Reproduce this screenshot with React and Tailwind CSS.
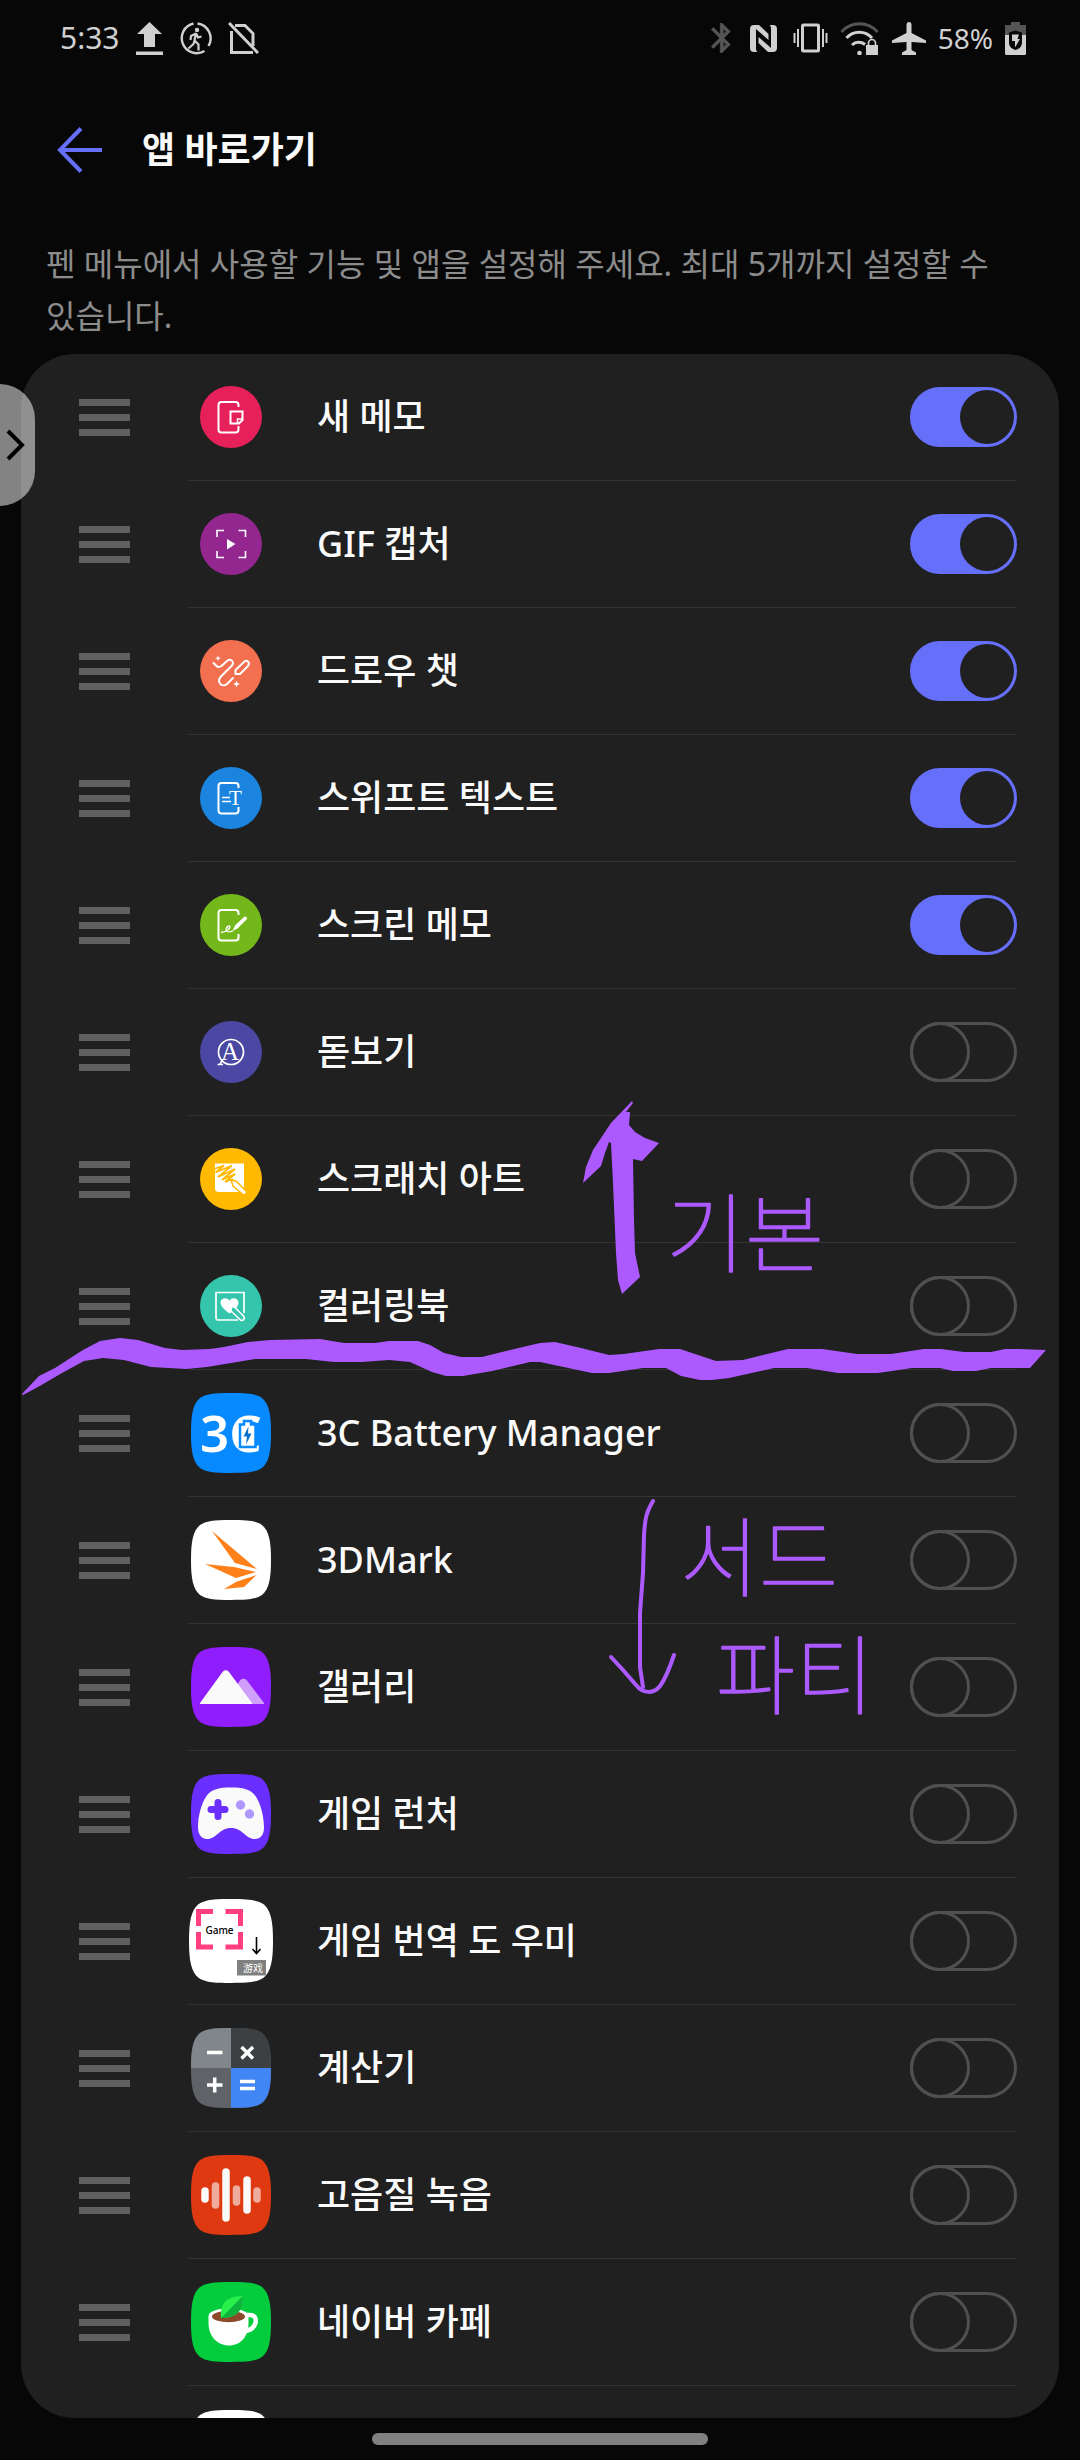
import React, { useState } from 'react';

const FONT = 'font-["Noto_Sans","Noto_Sans_CJK_KR",sans-serif]';
const SQUIRCLE = 'M40 0C58 0 65 1 71 5C78 11 80 21 80 40C80 59 78 69 71 75C65 79 58 80 40 80C22 80 15 79 9 75C2 69 0 59 0 40C0 21 2 11 9 5C15 1 22 0 40 0Z';
const PHONE = 'M38.5 21V19a3 3 0 0 0-3-3H21.5a3 3 0 0 0-3 3V43.5a3 3 0 0 0 3 3H35.5a3 3 0 0 0 3-3V40';

// Round icons of the built-in pen tools
const ToolIcon = ({ color, children }) => (
  <svg className="h-[62px] w-[62px]" viewBox="0 0 62 62" fill="none" stroke="white" strokeWidth="2" aria-hidden="true">
    <circle cx="31" cy="31" r="31" fill={color} stroke="none" />
    {children}
  </svg>
);

// Rounded square icons of the installed apps
const AppIcon = ({ color, children }) => (
  <svg className="h-20 w-20" viewBox="0 0 80 80" fill="none" aria-hidden="true">
    <path d={SQUIRCLE} fill={color} />
    {children}
  </svg>
);

const NewMemoIcon = () => (
  <ToolIcon color="#e62159">
    <path d={PHONE} />
    <path d="M30.5 25.5H42.5V34L39 37.5H30.5Z" />
    <path d="M37.5 37V33H42" strokeWidth="1.6" />
  </ToolIcon>
);

const GifIcon = () => (
  <ToolIcon color="#93268f">
    <path d="M17 24V17.5H24M38.5 17.5H45.5V24M45.5 38V44.5H38.5M24 44.5H17V38" strokeWidth="1.6" />
    <path d="M27 26L35.5 31L27 36.5Z" fill="white" stroke="none" />
  </ToolIcon>
);

const DrawChatIcon = () => (
  <ToolIcon color="#f26f4f">
    <path d="M13.5 23L16.5 26C18 27.5 20.5 27 22 25.5L27 21C31 18 35 22 31.5 26L21 36.5C16 42 22 48 27 44L33 38" strokeLinecap="round" />
    <path d="M35.5 34V30L44.5 21.5C47 19.5 50.5 22.5 48 26L40 34Z" strokeLinejoin="round" />
    <path d="M18 15.5L18.8 17.5L21 18.3L18.8 19.1L18 21.3L17.2 19.1L15 18.3L17.2 17.5Z" fill="white" stroke="none" />
    <path d="M36.5 40.5L37.5 43L40 44L37.5 45L36.5 47.5L35.5 45L33 44L35.5 43Z" fill="white" stroke="none" />
  </ToolIcon>
);

const SwiftTextIcon = () => (
  <ToolIcon color="#1b84de">
    <path d={PHONE} />
    <path d="M22 30.5H30M22 34.5H31" strokeWidth="1.4" />
    <text x="29" y="37.5" fontFamily="Liberation Serif, serif" fontSize="21" fill="white" stroke="none">T</text>
  </ToolIcon>
);

const ScreenMemoIcon = () => (
  <ToolIcon color="#74b71b">
    <path d={PHONE} />
    <path d="M32.5 37L35 31.5L44 23C45.5 21.5 48 23.5 46.5 25.5L37.5 34.5Z" fill="white" stroke="none" />
    <path d="M21 38.5C26 38 30 35 30 32.5C29.5 30.5 26 33 26 36C26.5 39 31 37.5 33 37" strokeWidth="1.3" />
  </ToolIcon>
);

const MagnifierIcon = () => (
  <ToolIcon color="#4b48a3">
    <circle cx="31" cy="31" r="12.5" strokeWidth="1.7" />
    <path d="M22.5 39L20 43M17.5 43.5H23" strokeWidth="1.6" />
    <text x="30" y="39" textAnchor="middle" fontFamily="Liberation Serif, serif" fontSize="25" fill="white" stroke="none">A</text>
  </ToolIcon>
);

const ScratchArtIcon = () => (
  <ToolIcon color="#ffb900">
    <path d="M15 15.5H44V44H18.5C16.5 44 15 42.5 15 41Z" fill="white" stroke="none" />
    <path d="M14 21L24 17.5L15.5 24.5L32 17.5L18 29L35 21L22 32L35 26L25 34L33 31" stroke="#ffb900" strokeWidth="1.7" />
    <path d="M31 32L36 33L46 43C47 45 45.5 47.5 43 46.5L33 38Z" fill="white" stroke="#ffb900" strokeWidth="1.5" />
  </ToolIcon>
);

const ColoringIcon = () => (
  <ToolIcon color="#35c5ac">
    <path d="M38 45H18.5a2.5 2.5 0 0 1-2.5-2.5V17.5H44V38" strokeWidth="1.7" />
    <path d="M29.5 38.5C23 34 20.5 30.5 20.5 27.5C20.5 23 26.5 21.5 29.5 25.5C32.5 21.5 38.5 23 38.5 27.5C38.5 31 36 34 29.5 38.5Z" fill="white" stroke="none" />
    <path d="M31 32L34.5 32L43.5 41C45.5 43.5 43 46.5 40.5 45L31 36Z" fill="#35c5ac" strokeWidth="1.7" strokeLinejoin="round" />
  </ToolIcon>
);

const BatteryManagerIcon = () => (
  <AppIcon color="#0789ff">
    <text x="9" y="59" fill="white" fontFamily="Noto Sans, sans-serif" fontSize="51" fontWeight="600">3C</text>
    <path d="M49 31.5H53V28H60V31.5H64.5V54H49Z" fill="white" stroke="#0789ff" strokeWidth="2.5" />
    <path d="M57.5 33.5L52.500 43.5H56L55 51.5L60.500 40.5H57Z" fill="#0a6fcc" />
  </AppIcon>
);

const BenchmarkIcon = () => (
  <AppIcon color="#ffffff">
    <path d="M21 11L66 49L44 43ZM14 44L43 47L65 52L45 58ZM65.5 55L53 67L33 69L46 61.5Z" fill="#ff8019" />
  </AppIcon>
);

const GalleryIcon = () => (
  <AppIcon color="#901dfc">
    <path d="M46 38L49 33.5C51 31 54 31 56 33.5L73 56V57H60Z" fill="#cf9ffb" />
    <path d="M9 56L31.5 25C33.5 22.5 36 22.5 38 25L61 56V57H9Z" fill="#fafafa" />
  </AppIcon>
);

const GameLauncherIcon = () => (
  <AppIcon color="#6a2fff">
    <path d="M40 13.5C51 13.5 60 15 64.5 22C70 30 73 43 73 54C73 62 68 65 64 65C54 65 52 54 40 54C28 54 26 65 16 65C11 65 7 61 7 53C7 43 10 30 15.5 22C20 15 29 13.5 40 13.5Z" fill="#fafafa" />
    <path d="M27 28.5V42.5M20 35.5H34" stroke="#6a2fff" strokeWidth="7" strokeLinecap="round" />
    <circle cx="49.5" cy="31" r="4.7" fill="#b096ff" />
    <circle cx="58.5" cy="40" r="4.7" fill="#b096ff" />
  </AppIcon>
);

const TranslatorIcon = () => (
  <svg className="h-[84px] w-[84px]" viewBox="0 0 84 84" fill="none" aria-hidden="true">
    <path d={SQUIRCLE} transform="scale(1.05)" fill="white" />
    <path d="M24 12.5H9.5V27M36.5 12.5H51.5V27M51.5 33V48H36.5M24 48H9.5V33" stroke="#ff3f80" strokeWidth="5" />
    <text x="30.5" y="34.5" textAnchor="middle" fontFamily="Noto Sans, sans-serif" fontSize="10" fontWeight="500" fill="black">Game</text>
    <path d="M67.5 38V54M63.5 50L67.5 54.5L71.5 50" stroke="black" strokeWidth="1.6" />
    <rect x="48" y="61" width="29" height="15.5" fill="#808080" />
    <text x="64" y="72.5" textAnchor="middle" fontFamily="Noto Sans CJK SC, sans-serif" fontSize="10" fill="white">游戏</text>
  </svg>
);

const CalculatorIcon = () => (
  <AppIcon color="#5f6368">
    <clipPath id="calc"><path d={SQUIRCLE} /></clipPath>
    <g clipPath="url(#calc)">
      <rect width="40" height="40" fill="#80868b" />
      <rect x="40" width="40" height="40" fill="#3c4043" />
      <rect x="40" y="40" width="40" height="40" fill="#4285f4" />
    </g>
    <path d="M16 24.5H31.5M50.5 19L62 30.5M62 19L50.5 30.5M16 57H31.5M23.7 49.5V64.5M49 53.5H64M49 60.5H64" stroke="white" strokeWidth="3.5" />
  </AppIcon>
);

const RecorderIcon = () => (
  <AppIcon color="#df3912">
    <g strokeWidth="7.5" strokeLinecap="round">
      <path d="M14 36V44M35 17V63M56 25V55" stroke="#fafafa" />
      <path d="M24.5 31V50M45.5 34V47M66 36V44" stroke="#efab9b" />
    </g>
  </AppIcon>
);

const CafeIcon = () => (
  <AppIcon color="#03cc3d">
    <path d="M54 33H59C64 33 65.5 37 64.5 41C63 46 59 48.5 53 49.5" stroke="white" strokeWidth="4.5" />
    <path d="M17.5 34C17.5 24 57.5 24 57.5 34V41C57.5 54 50 63.5 38 63.5C26 63.5 17.5 54 17.5 41Z" fill="white" />
    <ellipse cx="37.5" cy="34.5" rx="16.5" ry="5.8" fill="#8c4a2b" />
    <path d="M30 36C29 25 32 14 52 14C52 30 45 36 30 36Z" fill="#27f04c" />
    <path d="M30 36L52 14C52 30 45 36 30 36Z" fill="#0db33d" />
  </AppIcon>
);

const initialItems = [
  { name: '새 메모', icon: <NewMemoIcon />, on: true },
  { name: 'GIF 캡처', icon: <GifIcon />, on: true },
  { name: '드로우 챗', icon: <DrawChatIcon />, on: true },
  { name: '스위프트 텍스트', icon: <SwiftTextIcon />, on: true },
  { name: '스크린 메모', icon: <ScreenMemoIcon />, on: true },
  { name: '돋보기', icon: <MagnifierIcon />, on: false },
  { name: '스크래치 아트', icon: <ScratchArtIcon />, on: false },
  { name: '컬러링북', icon: <ColoringIcon />, on: false },
  { name: '3C Battery Manager', icon: <BatteryManagerIcon />, on: false },
  { name: '3DMark', icon: <BenchmarkIcon />, on: false },
  { name: '갤러리', icon: <GalleryIcon />, on: false },
  { name: '게임 런처', icon: <GameLauncherIcon />, on: false },
  { name: '게임 번역 도 우미', icon: <TranslatorIcon />, on: false },
  { name: '계산기', icon: <CalculatorIcon />, on: false },
  { name: '고음질 녹음', icon: <RecorderIcon />, on: false },
  { name: '네이버 카페', icon: <CafeIcon />, on: false },
];

const StatusBar = () => (
  <div className="flex h-[76px] shrink-0 items-center justify-between pl-[60px] pr-[54px] text-[#d0d0d0]">
    <div className="flex items-center gap-4">
      <span className="text-[30px] leading-10">5:33</span>
      <svg className="h-[33px] w-[27px]" viewBox="0 0 27 33" fill="currentColor" aria-hidden="true">
        <path d="M13.5 0L26 12H19V25H8V12H1ZM0 29.5H27V33H0Z" />
      </svg>
      <svg className="h-[33px] w-[33px]" viewBox="0 0 33 33" fill="none" stroke="currentColor" strokeWidth="2.4" aria-hidden="true">
        <path d="M18.5 1.5A15 15 0 0 1 29.5 24M25.5 29A15 15 0 1 1 14.5 1.5" />
        <circle cx="18" cy="8" r="2.2" fill="currentColor" stroke="none" />
        <path d="M17 11L15.5 18.5L19.5 22.5V28.5M15.5 18.5L14.5 22L9.5 26.5M17 11.5L12 14L11.5 18M17.5 12L19 15.5L22.5 14.5" strokeWidth="2.2" />
      </svg>
      <svg className="h-[33px] w-[31px]" viewBox="0 0 31 33" fill="none" stroke="currentColor" strokeWidth="3" aria-hidden="true">
        <path d="M1 1L30 31M3.5 9V30.5H25M7 3.5H17L25 11.5V24" />
      </svg>
    </div>
    <div className="flex items-center gap-3">
      <svg className="h-[30px] w-[26px] text-[#555555]" viewBox="5 2 13 20" fill="currentColor" stroke="currentColor" strokeWidth=".4" aria-hidden="true">
        <path d="M17.71 7.71L12 2h-1v7.59L6.41 5 5 6.41 10.59 12 5 17.59 6.41 19 11 14.41V22h1l5.71-5.71-4.3-4.29 4.3-4.29zM13 5.83l1.88 1.88L13 9.59V5.83zm1.88 10.46L13 18.17v-3.76l1.88 1.88z" />
      </svg>
      <svg className="h-[27px] w-[35px]" viewBox="-4 0 35 27" fill="currentColor" aria-hidden="true">
        <path d="M4 0H9L18.5 9V15L6 4V23C6 25 6.5 26.5 7.5 27H4Q0 27 0 23V4Q0 0 4 0Z" />
        <path d="M23 27H18L8.5 18V12L21 23V4C21 2 20.5 .5 19.5 0H23Q27 0 27 4V23Q27 27 23 27Z" />
      </svg>
      <svg className="h-[30px] w-[35px]" viewBox="0 0 35 30" fill="none" stroke="currentColor" aria-hidden="true">
        <rect x="9.5" y="2" width="16" height="26" rx="1" strokeWidth="3" />
        <path d="M1.5 10V20M33.5 10V20M5 6V24M30 6V24" strokeWidth="2" />
      </svg>
      <svg className="h-[33px] w-10" viewBox="0 0 40 33" fill="none" stroke="currentColor" strokeWidth="3" aria-hidden="true">
        <path d="M1.5 10A24 24 0 0 1 37.5 10" stroke="#555555" />
        <path d="M6.5 16A17 17 0 0 1 32 16M12 23A10 10 0 0 1 25 22.5" />
        <circle cx="19.5" cy="31" r="2.3" fill="currentColor" stroke="none" />
        <rect x="26" y="23" width="12" height="10" fill="currentColor" stroke="none" />
        <path d="M28.5 24V21a3.5 3.5 0 0 1 7 0V24" strokeWidth="1.7" />
      </svg>
      <svg className="h-[33px] w-[34px]" viewBox="0 0 34 33" fill="currentColor" aria-hidden="true">
        <path d="M17 0C18.5 0 19.5 1 19.5 3V11L34 18.5V21L19.5 20V28L24 30.5V33H10V30.5L14.5 28V20L0 21V18.5L14.5 11V3C14.5 1 15.5 0 17 0Z" />
      </svg>
      <span className="text-[28px] leading-10">58%</span>
      <svg className="h-[33px] w-[21px]" viewBox="0 0 21 33" fill="currentColor" aria-hidden="true">
        <path d="M6 0H15V3H21V13H0V3H6Z" fill="#555555" />
        <path d="M0 13H21V31.5Q21 33 19.5 33H1.5Q0 33 0 31.5Z" />
        <path d="M4 10.5L10.5 8.5L17 10.5V20C17 25 14 27 10.5 28C7 27 4 25 4 20Z" fill="#070707" />
        <path d="M7 12.5H14L12.5 17H15L10 25.5V19H7Z" />
      </svg>
    </div>
  </div>
);

const AppRow = ({ item, index, onToggle }) => {
  const id = `shortcut-${index}`;

  return (
    <li className="flex h-[127px] pl-[58px] pr-[42px]">
      <button type="button" aria-label={`${item.name} 이동`} className="flex w-[110px] flex-col justify-center gap-2">
        <span className="h-[7px] w-[51px] bg-[#606060]"></span>
        <span className="h-[7px] w-[51px] bg-[#606060]"></span>
        <span className="h-[7px] w-[51px] bg-[#606060]"></span>
      </button>
      <div className="flex flex-1 items-center border-b border-[#343434]">
        <div className="flex w-[84px] justify-center">{item.icon}</div>
        <label htmlFor={id} className="ml-11 flex-1 text-[36px] font-medium leading-[52px] text-[#fafafa]">
          {item.name}
        </label>
        <input
          id={id}
          type="checkbox"
          role="switch"
          checked={item.on}
          onChange={() => onToggle(index)}
          className="h-[60px] w-[107px] appearance-none rounded-full border-3 border-[#505050] before:-m-[3px] before:block before:size-[60px] before:rounded-full before:border-3 before:border-[#505050] checked:border-[#666ffa] checked:bg-[#666ffa] checked:before:m-0 checked:before:ml-[47px] checked:before:size-[54px] checked:before:border-0 checked:before:bg-[#202020]"
        />
      </div>
    </li>
  );
};

// Pen notes drawn over the list
const PenNotes = () => (
  <svg className="pointer-events-none absolute left-0 top-0 h-auto w-full" viewBox="0 0 1080 2460" fill="#ac5aff">
    <path d="M22 1394L39 1376L55 1368L72 1357L83 1350L100 1341L120 1338L138 1340L165 1348L182 1350L210 1349L224 1347L248 1342L270 1340L320 1339L344 1343L375 1343L389 1341H418L430 1345L444 1353L461 1357H482L506 1351L540 1343L555 1342L581 1348L609 1355L624 1354L659 1349H680L692 1353L716 1361L743 1360L788 1349H822L857 1354H891L924 1349H941L964 1352H991L1005 1349H1019L1046 1350L1030 1368H991L976 1371H953L940 1368H912L878 1373H838L807 1368H774L729 1378L712 1380H700L681 1376L666 1368H643L609 1373H592L540 1362H530L492 1371L463 1376H446L432 1372L410 1362L389 1360L362 1362H334L306 1359H255L207 1367L186 1369L151 1367L124 1360L103 1358L84 1361L62 1373L38 1387L23 1395Z" />
    <path d="M632 1101L633 1103L626 1112L630 1112L629 1125L635 1132L645 1138L659 1143L642 1161L633 1159L634 1220L635 1253L640 1277L622 1294L618 1280L616 1253L613 1183L611 1143L609 1142L605 1153L601 1166L583 1183L586 1167L593 1150L611 1123Z" />
    <g fill="none" stroke="#ac5aff" strokeWidth="4" strokeLinecap="round" strokeLinejoin="round">
      <path d="M653 1501C647 1511 645 1517 644 1535L643 1573L640 1613V1667L643 1687" />
      <path d="M611 1657L623 1670L636 1685C643 1694 654 1694 660 1686C666 1678 670 1667 674 1655" />
    </g>
    <g stroke="#ac5aff" strokeWidth="1.5" strokeLinejoin="round" fontFamily="Noto Sans CJK KR, sans-serif" fontSize="86" fontWeight="100">
      <text x="666" y="1266">기본</text>
      <text x="680" y="1590">서드</text>
      <text x="716" y="1708">파티</text>
    </g>
  </svg>
);

const App = () => {
  const [items, setItems] = useState(initialItems);

  const handleToggle = (index) => {
    setItems(items.map((item, i) => (i === index ? { ...item, on: !item.on } : item)));
  };

  return (
    <div className={`relative flex h-screen flex-col overflow-hidden bg-[#070707] ${FONT}`}>
      <StatusBar />

      <header className="flex h-[148px] shrink-0 items-center gap-10 pl-[56px]">
        <button type="button" aria-label="뒤로">
          <svg className="h-[46px] w-[46px]" viewBox="0 0 46 46" fill="none" stroke="#666ffa" strokeWidth="4" aria-hidden="true">
            <path d="M46 23H4M25 1.5L4 23L25 44.5" />
          </svg>
        </button>
        <h1 className="text-[36px] font-bold leading-[52px] text-[#fafafa]">앱 바로가기</h1>
      </header>

      <p className="shrink-0 break-keep px-[46px] pb-3 pt-3.5 text-[32px] leading-[52px] text-[#8c8c8c]">
        펜 메뉴에서 사용할 기능 및 앱을 설정해 주세요. 최대 5개까지 설정할 수 있습니다.
      </p>

      <ul className="mx-[21px] min-h-0 flex-1 overflow-hidden rounded-[54px] bg-[#202020]">
        {items.map((item, index) => (
          <AppRow key={item.name} item={item} index={index} onToggle={handleToggle} />
        ))}
        <li className="flex h-[127px] items-center pl-[170px]" aria-hidden="true">
          <AppIcon color="#ffffff" />
        </li>
      </ul>

      <div className="flex h-[42px] shrink-0 items-center justify-center">
        <div className="h-3 w-[336px] rounded-full bg-[#808080]"></div>
      </div>

      <button
        type="button"
        aria-label="사이드바 열기"
        className="absolute left-0 top-[384px] flex h-[122px] w-[35px] items-center rounded-r-[36px] bg-white/50"
      >
        <svg className="h-8 w-[27px]" viewBox="0 0 27 32" fill="none" stroke="black" strokeWidth="4" aria-hidden="true">
          <path d="M8 2L22 16L8 30" />
        </svg>
      </button>

      <PenNotes />
    </div>
  );
};

export default App;
